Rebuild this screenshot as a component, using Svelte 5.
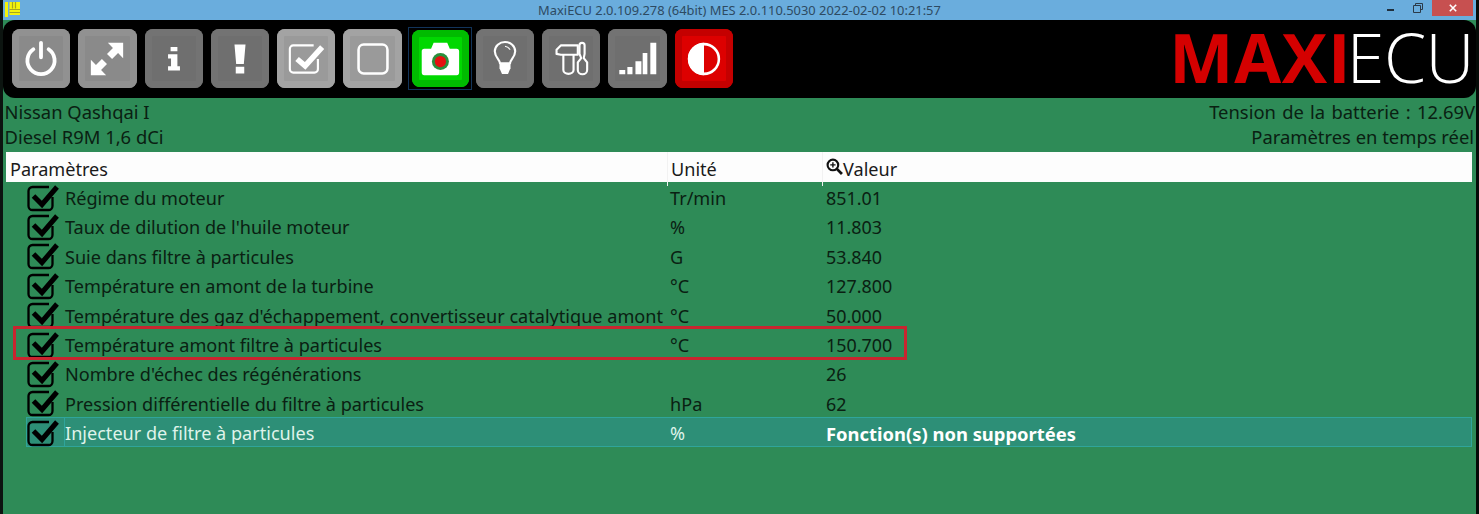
<script lang="ts">
  // Live data parameter list
  const rows = [
    { name: 'Régime du moteur', unit: 'Tr/min', value: '851.01' },
    { name: "Taux de dilution de l'huile moteur", unit: '%', value: '11.803' },
    { name: 'Suie dans filtre à particules', unit: 'G', value: '53.840' },
    { name: 'Température en amont de la turbine', unit: '°C', value: '127.800' },
    { name: "Température des gaz d'échappement, convertisseur catalytique amont", unit: '°C', value: '50.000' },
    { name: 'Température amont filtre à particules', unit: '°C', value: '150.700', marked: true },
    { name: "Nombre d'échec des régénérations", unit: '', value: '26' },
    { name: 'Pression différentielle du filtre à particules', unit: 'hPa', value: '62' },
    { name: 'Injecteur de filtre à particules', unit: '%', value: 'Fonction(s) non supportées', selected: true }
  ];
</script>

<div class="window">
  <header class="titlebar">
    <svg class="app-icon" viewBox="0 0 15 15">
      <path d="M0 0h3v15H0zM4.500 0H15v13H4.500z" fill="#f4f40c" />
      <path d="M7.500 0v6.500M10.500 0v6.500M4.500 7.500H15M4.500 10.500H15" stroke="#a5a520" stroke-width="1.200" fill="none" />
    </svg>
    <span class="title">MaxiECU 2.0.109.278 (64bit) MES 2.0.110.5030 2022-02-02 10:21:57</span>
    <div class="controls">
      <span class="min"></span>
      <svg class="restore" viewBox="0 0 10 10">
        <path d="M2.500 2.500V.5h7v6h-2M.5 2.500h7v7h-7z" fill="none" stroke="#2b3a48" />
      </svg>
      <span class="close">
        <svg viewBox="0 0 10 10"><path d="M1 1l8 8M9 1l-8 8" stroke="#fff" stroke-width="2" /></svg>
      </span>
    </div>
  </header>

  <div class="toolbar">
    <div class="buttons">
      <button class="btn mid" aria-label="Power">
        <svg viewBox="0 0 40 40"><path d="M11 8.500a16 16 0 1 0 18 0M20 1v17" fill="none" stroke="#fff" stroke-width="4.500" stroke-linecap="round" /></svg>
      </button>
      <button class="btn mid" aria-label="Expand">
        <svg viewBox="0 0 40 40"><path d="M21 1h18v18l-6-6-7 7-6-6 7-7zM19 39H1V21l6 6 7-7 6 6-7 7z" fill="#fff" /></svg>
      </button>
      <button class="btn dark" aria-label="Info">
        <svg viewBox="0 0 40 40"><path d="M16 6h8v5h-8zM13 14.500h11v14h3v5H13v-5h3.500v-9H13z" fill="#fff" /></svg>
      </button>
      <button class="btn dark" aria-label="Alert">
        <svg viewBox="0 0 40 40"><path d="M13.500 3h13l-2 23h-9zM15 29h10v8H15z" fill="#fff" /></svg>
      </button>
      <button class="btn light" aria-label="Select all">
        <svg viewBox="0 0 40 40">
          <path d="M34 20v12a4 4 0 0 1-4 4H5a4 4 0 0 1-4-4V8a4 4 0 0 1 4-4h24" fill="none" stroke="#fff" stroke-width="2.500" />
          <path d="M9.500 20l9.500 8L39 6" fill="none" stroke="#fff" stroke-width="6.500" />
        </svg>
      </button>
      <button class="btn light" aria-label="Select none">
        <svg viewBox="0 0 40 40"><rect x="3" y="3" width="34" height="34" rx="6" fill="none" stroke="#fff" stroke-width="3" /></svg>
      </button>
      <div class="focus-ring">
        <button class="btn green" aria-label="Capture">
          <svg viewBox="-0.500 0 40 40">
            <path d="M1 8h8l3-7h16l3 7h8a3 3 0 0 1 3 3v25a3 3 0 0 1-3 3H1a3 3 0 0 1-3-3V11a3 3 0 0 1 3-3z" fill="#fff" />
            <circle cx="20" cy="23" r="10" fill="#2a8f3c" />
            <circle cx="20" cy="23" r="6.600" fill="#e51010" />
          </svg>
        </button>
      </div>
      <button class="btn dark" aria-label="Hints">
        <svg viewBox="0 0 40 40">
          <path d="M14 25c0-4-6-7-6-14a12 11 0 0 1 24 0c0 7-6 10-6 14z" fill="none" stroke="#fff" stroke-width="2.500" stroke-linejoin="round" />
          <path d="M13.500 25h13v6l-3 6.500h-7l-3-6.500z" fill="#fff" />
          <path d="M20 5a8 8 0 0 1 6 4" fill="none" stroke="#fff" stroke-width="1.300" />
        </svg>
      </button>
      <button class="btn dark" aria-label="Tools">
        <svg viewBox="1 0 40 40">
          <path d="M4 9l5-5h20v11H9l-5-1zM12 15h12v18a6 4.500 0 0 1-12 0z" fill="none" stroke="#fff" stroke-width="2.500" stroke-linejoin="round" />
          <path d="M31 4a3 3 0 0 1 6 0v10l-1 5 4 5v9a5.500 5 0 0 1-11 0v-9l4-5-2-5z" fill="none" stroke="#fff" stroke-width="2.500" stroke-linejoin="round" />
        </svg>
      </button>
      <button class="btn dark" aria-label="Signal">
        <svg viewBox="2 0 40 40"><path d="M0 33h7v5H0zM9.500 29.500h6V38h-6zM19 22.500h7V38h-7zM27.500 13H33v25h-5.500zM36.500 1h7v37h-7z" fill="#fff" /></svg>
      </button>
      <button class="btn red" aria-label="Contrast">
        <svg viewBox="0 0 40 40">
          <path d="M20 1a19 19 0 0 0 0 38z" fill="#fff" />
          <circle cx="20" cy="20" r="17.500" fill="none" stroke="#fff" stroke-width="3" />
        </svg>
      </button>
    </div>
    <div class="logo"><span class="maxi">MAXI</span><span class="ecu">ECU</span></div>
  </div>

  <div class="info">
    <div>
      <div>Nissan Qashqai I</div>
      <div>Diesel R9M 1,6 dCi</div>
    </div>
    <div class="info-right">
      <div class="voltage">Tension de la batterie : 12.69V</div>
      <div>Paramètres en temps réel</div>
    </div>
  </div>

  <div class="table">
    <div class="head">
      <div class="head-name">Paramètres</div>
      <div class="head-unit">Unité</div>
      <div class="head-value">
        <svg viewBox="0 0 16 16">
          <circle cx="6.500" cy="6.500" r="5" fill="none" stroke="#111" stroke-width="2" />
          <path d="M10 10l5 5" stroke="#111" stroke-width="2.600" />
          <path d="M4 6.500h5M6.500 4v5" stroke="#111" stroke-width="1.300" />
        </svg>
        Valeur
      </div>
    </div>
    {#each rows as row}
      <div class="row" class:selected={row.selected}>
        <div class="check">
          <svg viewBox="0 0 32 30">
            <path d="M25.500 15v9a4 4 0 0 1-4 4h-16a4 4 0 0 1-4-4V9a4 4 0 0 1 4-4H22" fill="none" stroke="#000" stroke-width="2.300" />
            <path d="M6.500 14l8.500 8.500L30 5" fill="none" stroke="#000" stroke-width="5" />
          </svg>
        </div>
        <div class="name">{row.name}</div>
        <div class="unit">{row.unit}</div>
        <div class="value">{row.value}</div>
        {#if row.marked}<div class="marker"></div>{/if}
      </div>
    {/each}
  </div>
</div>

<style>
  :global(body) {
    background: #2e8b57;
  }

  .window {
    height: 514px;
    overflow: hidden;
    box-sizing: border-box;
    border-left: 3px solid #0c1410;
    border-right: 3px solid #050a07;
    background: #2e8b57;
    font-family: "Noto Sans", sans-serif;
    font-size: 18.100px;
    color: #0a2012;
  }

  .titlebar {
    position: relative;
    height: 20px;
    margin: 0 -3px;
    background: #6aaddd;
    display: flex;
    justify-content: center;
    align-items: center;
  }

  .app-icon {
    position: absolute;
    left: 5px;
    top: 2px;
    width: 15px;
    height: 15px;
  }

  .title {
    font-size: 12.900px;
    color: #2d4a62;
  }

  .controls {
    position: absolute;
    right: 6px;
    top: 0;
    display: flex;
    align-items: center;
    height: 16px;
  }

  .min {
    width: 7px;
    height: 2px;
    background: #1f2f3d;
    margin-top: 4px;
    margin-right: 19px;
  }

  .restore {
    width: 10px;
    height: 10px;
    margin-right: 9px;
  }

  .close {
    width: 41px;
    height: 16px;
    background: #c75050;
    display: flex;
    align-items: center;
    justify-content: center;
  }

  .close svg {
    width: 8px;
    height: 8px;
  }

  .toolbar {
    height: 78px;
    box-sizing: border-box;
    background: #000;
    border-radius: 12px;
    display: flex;
    justify-content: space-between;
    padding: 9px 2px 0 9px;
  }

  .buttons {
    display: flex;
    gap: 8px;
    align-items: flex-start;
  }

  .btn {
    width: 58.300px;
    height: 59px;
    padding: 0;
    border: none;
    border-radius: 8px;
    display: flex;
    align-items: center;
    justify-content: center;
    flex: none;
  }

  .btn svg {
    width: 34px;
    height: 34px;
    overflow: visible;
  }

  .mid {
    background: #8a8a8a;
    box-shadow: inset 0 0 0 7px #919191;
  }

  .dark {
    background: #6f6f6f;
    box-shadow: inset 0 0 0 7px #737373;
  }

  .light {
    background: #9a9a9a;
    box-shadow: inset 0 0 0 7px #a3a3a3;
  }

  .green {
    width: 57px;
    height: 57px;
    background: #00d800;
    box-shadow: inset 0 0 0 7px #00bb00;
  }

  .red {
    background: #dd0000;
    box-shadow: inset 0 0 0 7px #c40000;
  }

  .focus-ring {
    width: 64px;
    height: 63px;
    box-sizing: border-box;
    margin: -2px -4px 0 -2px;
    padding: 2px 0 0 3px;
    border: 1px solid #12345a;
    flex: none;
  }

  .logo {
    font-family: "Open Sans", sans-serif;
    font-size: 68px;
    line-height: 60px;
    white-space: nowrap;
    margin-top: -2px;
  }

  .maxi {
    color: #d40000;
    font-weight: 700;
    letter-spacing: 0.800px;
  }

  .ecu {
    color: #fff;
    font-weight: 300;
    letter-spacing: -0.500px;
    margin-left: -4.500px;
  }

  .info {
    display: flex;
    justify-content: space-between;
    padding: 1px 2px 0 1.500px;
    line-height: 25px;
    height: 52px;
    box-sizing: border-box;
    margin-bottom: 2px;
    font-size: 18.400px;
  }

  .info-right {
    text-align: right;
  }

  .voltage {
    word-spacing: 1.500px;
    margin-right: -1px;
  }

  .table {
    margin: 0 4px 0 3px;
  }

  .head {
    display: grid;
    grid-template-columns: 661px 155px 1fr;
    height: 30px;
    line-height: 34px;
    background: #fdfdfd;
    color: #1a1a1a;
  }

  .head-name {
    padding-left: 4px;
  }

  .head-unit {
    padding-left: 3px;
    border-left: 1px solid #f2f2f2;
  }

  .head-value {
    padding-left: 3px;
    border-left: 1px solid #f2f2f2;
    display: flex;
    align-items: center;
  }

  .head-value svg {
    width: 17px;
    height: 17px;
    margin-top: -6px;
  }

  .row {
    position: relative;
    display: grid;
    grid-template-columns: 59px 602px 155px 1fr;
    grid-template-rows: 29.400px;
    height: 29.400px;
    line-height: 33px;
    white-space: nowrap;
  }

  .check {
    padding-left: 21px;
    display: flex;
    align-items: center;
  }

  .check svg {
    width: 32px;
    height: 30px;
    flex: none;
  }

  .name {
    overflow: visible;
  }

  .unit {
    padding-left: 3px;
  }

  .value {
    padding-left: 4px;
    font-size: 17.900px;
  }

  .selected .name,
  .selected .unit,
  .selected .value {
    background: #2d8f77;
    box-shadow: inset 0 1px 0 #2fa59b, inset 0 -1px 0 #2fa59b;
    color: #dff3ea;
  }

  .selected .value {
    color: #fff;
    font-weight: 700;
    font-size: 18.400px;
    box-shadow: inset 0 1px 0 #2fa59b, inset 0 -1px 0 #2fa59b, inset -1px 0 0 #2fa59b;
  }

  .selected .check {
    position: relative;
  }

  .selected .check::before {
    content: "";
    position: absolute;
    left: 20px;
    top: 0;
    right: 0;
    bottom: 0;
    background: #2d8f77;
    border: 1px solid #2fa59b;
  }

  .selected .check svg {
    position: relative;
  }

  .marker {
    position: absolute;
    left: 7px;
    top: -3px;
    width: 888px;
    height: 28px;
    border: 3px solid #c9252f;
    pointer-events: none;
  }
</style>
